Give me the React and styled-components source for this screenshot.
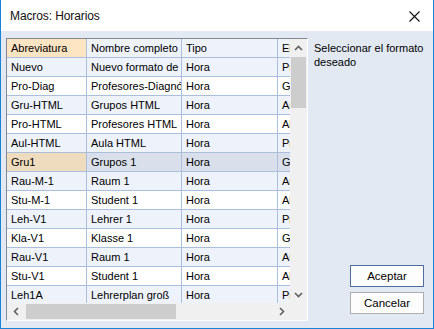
import React from 'react'
import styled, { createGlobalStyle } from 'styled-components'

const GlobalStyle = createGlobalStyle`
  body {
    margin: 0;
    font-family: "Liberation Sans", Arial, sans-serif;
  }
`

const rows = [
  ['Nuevo', 'Nuevo formato de listado', 'Hora', 'Profesores'],
  ['Pro-Diag', 'Profesores-Diagnóstico', 'Hora', 'Grupos'],
  ['Gru-HTML', 'Grupos HTML', 'Hora', 'Aulas'],
  ['Pro-HTML', 'Profesores HTML', 'Hora', 'Alumnos'],
  ['Aul-HTML', 'Aula HTML', 'Hora', 'Profesores'],
  ['Gru1', 'Grupos 1', 'Hora', 'Grupos'],
  ['Rau-M-1', 'Raum 1', 'Hora', 'Aulas'],
  ['Stu-M-1', 'Student 1', 'Hora', 'Alumnos'],
  ['Leh-V1', 'Lehrer 1', 'Hora', 'Profesores'],
  ['Kla-V1', 'Klasse 1', 'Hora', 'Grupos'],
  ['Rau-V1', 'Raum 1', 'Hora', 'Aulas'],
  ['Stu-V1', 'Student 1', 'Hora', 'Alumnos'],
  ['Leh1A', 'Lehrerplan groß', 'Hora', 'Profesores'],
]
const SELECTED = 5

export default function App() {
  return (
    <>
      <GlobalStyle />
      <Window>
        <TitleBar>
          <Title>Macros: Horarios</Title>
          <CloseButton>
            <svg width="11" height="11" viewBox="0 0 11 11">
              <path d="M0.5 0.5 L10.5 10.5 M10.5 0.5 L0.5 10.5" stroke="#111" strokeWidth="1.1" />
            </svg>
          </CloseButton>
        </TitleBar>
        <Body>
          <GridFrame>
            <Table>
              <Cell $header $first>Abreviatura</Cell>
              <Cell $header>Nombre completo</Cell>
              <Cell $header>Tipo</Cell>
              <Cell $header>Elemento</Cell>
              {rows.map((r, i) =>
                r.map((v, j) => (
                  <Cell
                    key={i + '-' + j}
                    $alt={i % 2 === 0}
                    $selected={i === SELECTED}
                    $first={j === 0}
                  >
                    {v}
                  </Cell>
                ))
              )}
            </Table>
            <VScroll>
              <ArrowBox>
                <svg width="9" height="6" viewBox="0 0 9 6">
                  <polyline points="1,5 4.5,1.5 8,5" fill="none" stroke="#606060" strokeWidth="1.6" />
                </svg>
              </ArrowBox>
              <VThumb />
              <VTrack />
              <ArrowBox>
                <svg width="9" height="6" viewBox="0 0 9 6">
                  <polyline points="1,1 4.5,4.5 8,1" fill="none" stroke="#606060" strokeWidth="1.6" />
                </svg>
              </ArrowBox>
            </VScroll>
            <HScroll>
              <ArrowBox>
                <svg width="6" height="9" viewBox="0 0 6 9">
                  <polyline points="5,1 1.5,4.5 5,8" fill="none" stroke="#606060" strokeWidth="1.6" />
                </svg>
              </ArrowBox>
              <HThumb />
              <HTrack />
              <ArrowBox>
                <svg width="6" height="9" viewBox="0 0 6 9">
                  <polyline points="1,1 4.5,4.5 1,8" fill="none" stroke="#606060" strokeWidth="1.6" />
                </svg>
              </ArrowBox>
            </HScroll>
            <Corner />
          </GridFrame>
          <SidePanel>
            <Hint>Seleccionar el formato deseado</Hint>
            <Buttons>
              <Button $default>Aceptar</Button>
              <Button>Cancelar</Button>
            </Buttons>
          </SidePanel>
        </Body>
      </Window>
    </>
  )
}

const Window = styled.div`
  width: 434px;
  height: 329px;
  box-sizing: border-box;
  border: 1px solid #1883d7;
  border-top: none;
  display: flex;
  flex-direction: column;
  background: #e3e9f2;
`

const TitleBar = styled.div`
  height: 31px;
  flex: none;
  background: #fff;
  display: flex;
  align-items: center;
  justify-content: space-between;
  padding: 0 13px 0 9px;
`

const Title = styled.div`
  font-size: 12px;
  color: #111;
  letter-spacing: -0.1px;
`

const CloseButton = styled.div`
  display: flex;
  align-items: center;
  margin-top: 1px;
`

const Body = styled.div`
  flex: 1;
  display: flex;
  padding: 7px 0 0 5px;
  min-height: 0;
`

const GridFrame = styled.div`
  width: 302px;
  height: 283px;
  flex: none;
  box-sizing: border-box;
  border-top: 1px solid #828790;
  border-left: 1px solid #828790;
  border-right: 1px solid #fff;
  border-bottom: 1px solid #fff;
  display: grid;
  grid-template-columns: 283px 17px;
  grid-template-rows: 264px 17px;
  background: #fff;
`

const Table = styled.div`
  overflow: hidden;
  display: grid;
  grid-template-columns: 80px 95px 96px 60px;
  grid-auto-rows: 19px;
  font-size: 11px;
  color: #000;
`

const Cell = styled.div`
  box-sizing: border-box;
  border-right: 1px solid #abbedb;
  border-bottom: 1px solid #abbedb;
  padding: 0 0 0 4px;
  display: flex;
  align-items: center;
  white-space: nowrap;
  overflow: hidden;
  background: ${(p) =>
    p.$header
      ? p.$first
        ? '#fde4c3'
        : '#eef2fa'
      : p.$selected
        ? p.$first
          ? '#efdcbe'
          : '#d9e0eb'
        : p.$alt
          ? '#eef2fa'
          : '#fff'};
`

const VScroll = styled.div`
  background: #f0f0f0;
  display: flex;
  flex-direction: column;
`

const HScroll = styled.div`
  background: #f0f0f0;
  display: flex;
`

const ArrowBox = styled.div`
  width: 17px;
  height: 17px;
  flex: none;
  display: flex;
  align-items: center;
  justify-content: center;
`

const VThumb = styled.div`
  height: 51px;
  margin: 1px 1px 0;
  background: #cdcdcd;
  flex: none;
`

const VTrack = styled.div`
  flex: 1;
`

const HThumb = styled.div`
  width: 150px;
  margin: 1px 0;
  margin-left: 2px;
  background: #cdcdcd;
  flex: none;
`

const HTrack = styled.div`
  flex: 1;
`

const Corner = styled.div`
  background: #f0f0f0;
`

const SidePanel = styled.div`
  flex: 1;
  min-width: 0;
  display: flex;
  flex-direction: column;
  justify-content: space-between;
  padding: 3px 9px 14px 6px;
`

const Hint = styled.div`
  font-size: 11px;
  line-height: 14px;
  color: #000;
  margin-right: -9px;
`

const Buttons = styled.div`
  display: flex;
  flex-direction: column;
  align-items: flex-end;
  gap: 5px;
`

const Button = styled.div`
  width: 74px;
  height: 22px;
  box-sizing: border-box;
  border: 1px solid ${(p) => (p.$default ? '#4f6fa3' : '#adadad')};
  background: #fdfdfd;
  display: flex;
  align-items: center;
  justify-content: center;
  font-size: 11.5px;
  color: #000;
`
